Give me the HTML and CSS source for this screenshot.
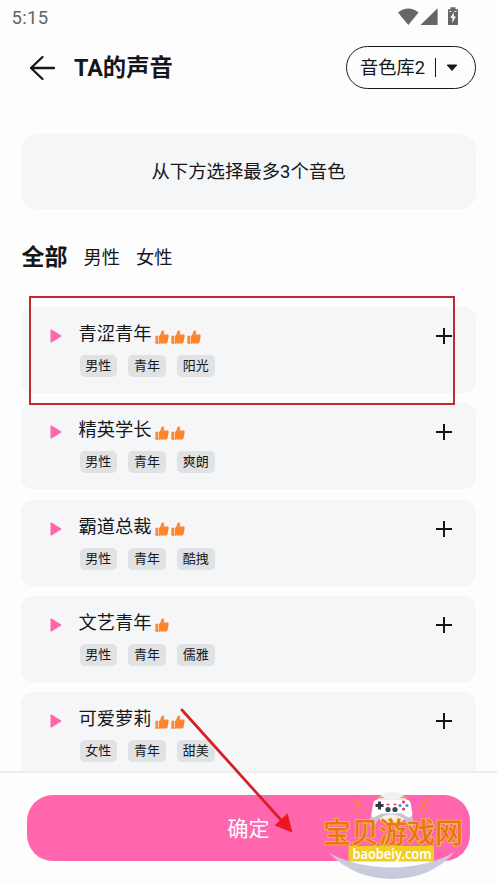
FILE: index.html
```
<!DOCTYPE html>
<html lang="zh-CN">
<head>
<meta charset="utf-8">
<title>TA的声音</title>
<link rel="stylesheet" href="styles.css">
</head>
<body>
<svg class="defs" aria-hidden="true">
  <symbol id="play" viewBox="0 0 12 14"><path d="M1.200 1.200v11.600L10.800 7z" fill="#ff66ae" stroke="#ff66ae" stroke-width="1.400" stroke-linejoin="round"/></symbol>
  <symbol id="thumb" viewBox="0 0 14 14"><path d="M.4 5.800H2.900v7.700H.4zM3.700 5.800h1L6.700 1Q7 .3 7.800.4q1.500.2 1.400 1.600L8.800 4.600H12.500q1.400.1 1.200 1.300l-1.200 6.500q-.3 1.100-1.400 1.100H3.700z" fill="#fd8530"/><path d="M.4 13h4" stroke="#fd8530"/></symbol>
  <symbol id="plus" viewBox="0 0 18 18"><path d="M9 1v16M1 9h16" stroke="#161719" stroke-width="2"/></symbol>
</svg>
<div class="screen">
  <div class="status">
    <span class="clock">5:15</span>
    <svg class="status-icons" width="64" height="20" viewBox="0 0 64 20" fill="#666">
      <path d="M0 4.500Q10.300-3.500 20.600 4.500L10.300 17z"/>
      <path d="M39.600.3V17H22.500z"/>
      <path fill-rule="evenodd" d="M52.500-.8h5v2H60V17H50V1.200h2.500zM55.800 4l-3.500 6h2.200l-.3 5 3.800-6.500h-2.200z"/>
      <path d="M51.500 3.500h2M56.500 3.500h2" stroke="#fdfdfd" stroke-width="1.200"/>
    </svg>
  </div>
  <header class="header">
    <svg class="back" width="28" height="26" viewBox="0 0 28 26" fill="none" stroke="#161719" stroke-width="2.300" stroke-linecap="round" stroke-linejoin="round"><path d="M14.500 2 3 13 14.500 24M3 13H26"/></svg>
    <h1 class="title">TA的声音</h1>
    <button class="library"><span>音色库2</span><i class="divider"></i>
      <svg width="12" height="8" viewBox="0 0 12 8"><path d="M1.200 1h9.600L6 6.500z" fill="#161719" stroke="#161719" stroke-linejoin="round"/></svg>
    </button>
  </header>
  <div class="notice">从下方选择最多3个音色</div>
  <nav class="tabs"><b>全部</b><span>男性</span><span>女性</span></nav>
  <main class="list">
    <section class="card">
      <svg class="play"><use href="#play"/></svg>
      <div class="info">
        <div class="name"><span>青涩青年</span><svg class="thumb"><use href="#thumb"/></svg><svg class="thumb"><use href="#thumb"/></svg><svg class="thumb"><use href="#thumb"/></svg></div>
        <div class="tags"><span>男性</span><span>青年</span><span>阳光</span></div>
      </div>
      <svg class="plus"><use href="#plus"/></svg>
    </section>
    <section class="card">
      <svg class="play"><use href="#play"/></svg>
      <div class="info">
        <div class="name"><span>精英学长</span><svg class="thumb"><use href="#thumb"/></svg><svg class="thumb"><use href="#thumb"/></svg></div>
        <div class="tags"><span>男性</span><span>青年</span><span>爽朗</span></div>
      </div>
      <svg class="plus"><use href="#plus"/></svg>
    </section>
    <section class="card">
      <svg class="play"><use href="#play"/></svg>
      <div class="info">
        <div class="name"><span>霸道总裁</span><svg class="thumb"><use href="#thumb"/></svg><svg class="thumb"><use href="#thumb"/></svg></div>
        <div class="tags"><span>男性</span><span>青年</span><span>酷拽</span></div>
      </div>
      <svg class="plus"><use href="#plus"/></svg>
    </section>
    <section class="card">
      <svg class="play"><use href="#play"/></svg>
      <div class="info">
        <div class="name"><span>文艺青年</span><svg class="thumb"><use href="#thumb"/></svg></div>
        <div class="tags"><span>男性</span><span>青年</span><span>儒雅</span></div>
      </div>
      <svg class="plus"><use href="#plus"/></svg>
    </section>
    <section class="card">
      <svg class="play"><use href="#play"/></svg>
      <div class="info">
        <div class="name"><span>可爱萝莉</span><svg class="thumb"><use href="#thumb"/></svg><svg class="thumb"><use href="#thumb"/></svg></div>
        <div class="tags"><span>女性</span><span>青年</span><span>甜美</span></div>
      </div>
      <svg class="plus"><use href="#plus"/></svg>
    </section>
  </main>
  <footer class="footer"><button class="confirm">确定</button></footer>

  <div class="highlight"></div>
  <svg class="pointer" width="120" height="130" viewBox="0 0 120 130"><path d="M6 5 105 115" stroke="#d71f26" stroke-width="2.800" stroke-linecap="round"/><path d="m116.500 127.500-18-7 13-12z" fill="#ec1620"/></svg>
  <svg class="watermark" width="152" height="96" viewBox="0 0 152 96">
    <circle cx="73" cy="20" r="16.500" fill="#f1f1ee"/>
    <g transform="translate(-3.500 .5)">
      <path d="M58 14Q60 10 67 11H85Q92 10 94 14L98 34Q98 40 94 38L88 30Q83 26 76 26Q69 26 64 30L58 38Q54 40 54 34Z" fill="#c3c4d0"/>
      <path d="M58 14Q60 10 67 11H86Q93 10 95 14L97 26Q96 30 91 28L86 25H66L60 28Q56 30 56 26Z" fill="#fff"/>
      <path d="M61 9h7M85 9h7" stroke="#e6a43c" stroke-width="1.600"/>
      <path d="M64 13v8M60 17h8" stroke="#303849" stroke-width="3"/>
      <g fill="#344a5a"><circle cx="72.500" cy="21" r="2.600"/><circle cx="79.500" cy="21" r="2.600"/></g>
      <path d="M71 16h3M78 16h3" stroke="#e24162" stroke-width="1.500"/>
      <g><circle cx="88" cy="13.500" r="1.600" fill="#e43c52"/><circle cx="88" cy="20.500" r="1.600" fill="#e43c52"/><circle cx="84.500" cy="17" r="1.600" fill="#4b91d4"/><circle cx="91.500" cy="17" r="1.600" fill="#4b91d4"/></g>
    </g>
    <path d="m34 10 6.500 5.500-1 1.500 4 4.500-6-4 1-1.500zM110 10l-6.500 5.500 1 1.500-4 4.500 6-4-1-1.500zM33 22.500l4 1v2l3 1M109 22.500l-4 1v2l-3 1" fill="#f28e23" stroke="#f28e23" stroke-width=".8"/>
    <path d="M10 65Q36 79 73 79.500Q110 79 135.500 64Q112 91 73 91Q36 91 10 65Z" fill="#c9cbdc"/>
    <text class="mark-name" x="4" y="54.500" textLength="140">宝贝游戏网</text>
    <path d="M29.500 58H115v15.500H29.500z" fill="#f0cf25"/>
    <text class="mark-url" x="33.500" y="70.500" textLength="79" lengthAdjust="spacingAndGlyphs">baobeiy.com</text>
  </svg>
</div>
</body>
</html>
```
FILE: styles.css
```
* { box-sizing: border-box; }
body { margin: 0; background: #fdfdfd; color: #161719; font-family: Roboto, "Noto Sans CJK SC", sans-serif; }
button { font: inherit; color: inherit; border: 0; padding: 0; }
svg { display: block; flex: none; }
.defs { position: absolute; width: 0; height: 0; }
.screen { position: relative; width: 497px; height: 884px; overflow: hidden; display: flex; flex-direction: column; }
.status { height: 34px; display: flex; justify-content: space-between; padding: 8px 35px 0 11.5px; color: #666; }
.clock { font-size: 18.5px; line-height: 20px; letter-spacing: .3px; }
.status-icons { overflow: visible; }
.header { height: 66px; display: flex; align-items: center; padding: 0 21px 0 28px; }
.back { margin-top: 1px; }
.title { flex: 1; margin: 1px 0 0 18px; font-size: 23.3px; line-height: 32px; font-weight: 700; }
.library { width: 130px; height: 43px; margin-top: 1px; border: 1.5px solid #161719; border-radius: 22px; background: transparent; display: flex; align-items: center; padding-left: 13px; font-size: 18.3px; }
.library span { margin-top: -3px; }
.divider { width: 1px; height: 19px; margin: 0 10px; background: #161719; }
.notice { height: 75px; margin: 33.5px 21px 0; padding-bottom: 3px; border-radius: 16px; background: #f5f6f8; display: flex; align-items: center; justify-content: center; font-size: 18.4px; }
.tabs { height: 98.5px; padding: 0 22px 4px; display: flex; align-items: center; gap: 16px; font-size: 18.3px; }
.tabs b { margin: -2px 0 0 -.5px; font-size: 23px; font-weight: 700; }
.list { height: 464px; padding: 0 21px; overflow: hidden; display: flex; flex-direction: column; gap: 10.25px; }
.card { flex: none; height: 86px; padding: 0 23px 0 28px; border-radius: 12px; background: #f5f6f8; display: flex; align-items: flex-start; }
.play { width: 12px; height: 14px; margin: 22px 0 0 .5px; }
.info { flex: 1; padding: 13px 0 0 17px; }
.name { height: 27px; display: flex; align-items: center; font-size: 18.3px; line-height: 27px; }
.name span { margin-right: 3.5px; }
.thumb { width: 14px; height: 14px; margin: 6px 2px 0 0; }
.thumb + .thumb { margin-left: -.1px; }
.tags { display: flex; gap: 11px; padding: 8px 0 0 1px; }
.tags span { width: 37.7px; height: 22px; border-radius: 5px; background: #e1e2e4; font-size: 13px; line-height: 21px; text-align: center; }
.plus { width: 18px; height: 18px; margin-top: 20px; }
.footer { flex: 1; border-top: 2px solid #ededee; padding: 22px 27px; background: #fdfdfd; }
.confirm { display: block; width: 443px; height: 66px; padding-bottom: 2px; border-radius: 26px; background: #ff66ad; color: #fff; font-size: 21px; }
.highlight { position: absolute; left: 29px; top: 296px; width: 426px; height: 109px; border: 2px solid #c02b2e; }
.pointer { position: absolute; left: 176px; top: 705px; }
.watermark { position: absolute; left: 319px; top: 788px; }
.mark-name { font: 500 28px "Noto Sans CJK SC", sans-serif; fill: #e8741c; stroke: #f8bd4c; stroke-width: 1.6px; paint-order: stroke; }
.mark-url { font: 600 15px "Noto Sans", sans-serif; fill: #fff; }
```
